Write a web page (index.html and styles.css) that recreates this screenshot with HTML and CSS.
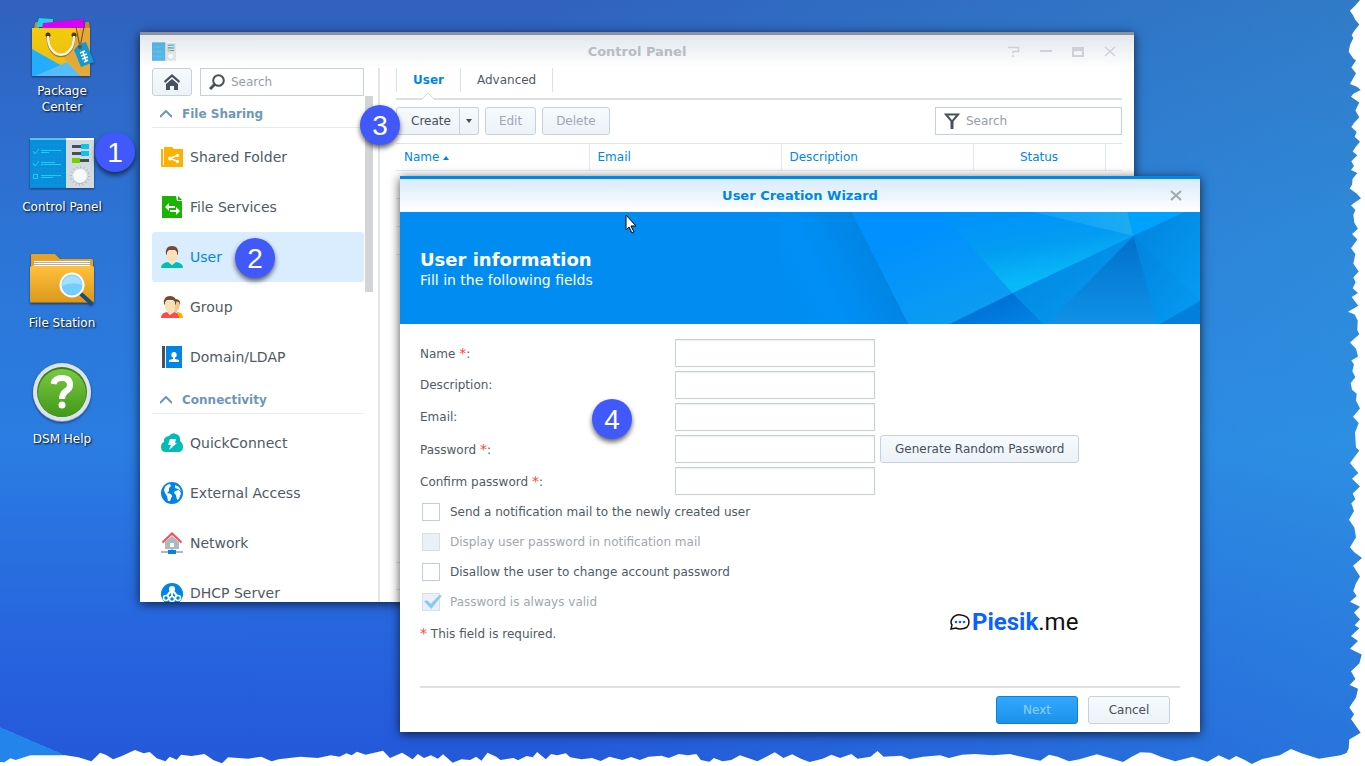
FILE: index.html
```html
<!DOCTYPE html>
<html lang="en">
<head>
<meta charset="utf-8">
<title>Control Panel - User Creation Wizard</title>
<link rel="stylesheet" href="styles.css">
</head>
<body>
<div class="desktop">
  <nav class="shortcuts" aria-label="Desktop">
    <a class="shortcut" href="#package-center">
      <svg viewBox="0 0 64 64" width="64" height="64" aria-hidden="true">
        <defs><linearGradient id="bag" x2="0" y2="1"><stop offset="0" stop-color="#f2cc0a"/><stop offset="1" stop-color="#e9b91a"/></linearGradient></defs>
        <path d="M5 8l1-1h3v6H4zM55 8l1-1h3l1 6h-5z" fill="#c78a20"/>
        <path d="M9 3l14 1v8H6z" fill="#22d0ee"/>
        <path d="M13 8L53 4l2 10H12z" fill="#d800f5"/>
        <path d="M2 13h58v48H2z" fill="url(#bag)"/>
        <path d="M50 13h10v48H50L34 43z" fill="#e5a93a"/>
        <path d="M2 34l48 27H2z" fill="#22aefc"/>
        <path d="M5 61l32-14 13 14z" fill="#55bdf8"/>
        <circle cx="18" cy="20" r="2.500" fill="#50310a"/><circle cx="44" cy="20" r="2.500" fill="#50310a"/>
        <path d="M18 22c0 25 26 25 26 0" fill="none" stroke="#a87518" stroke-width="3"/>
        <path d="M18 21c0 25 26 25 26 0" fill="none" stroke="#fff3e2" stroke-width="2.500"/>
        <path d="M46 12l4 20 4-20" fill="none" stroke="#6d491b" stroke-width="1"/>
        <path d="M44 35l5-6 7-2 8 20-13 5z" fill="#1499d7"/>
        <circle cx="50" cy="32" r="2" fill="#795021"/>
        <path d="M50 38l5-2M51 41l6-2M52 44l6-2M54 47l4-2M53 37l3 9" stroke="#fff" stroke-width="1.500"/>
      </svg>
      <span>Package<br>Center</span>
    </a>
    <a class="shortcut" href="#control-panel">
      <svg viewBox="0 0 64 64" width="64" height="64" aria-hidden="true">
        <g id="panel-art">
          <path d="M0 7h36v50H0z" fill="#078ed9"/><path d="M36 7h28v50H36z" fill="#d3dbe0"/>
          <path d="M0 7h36v2H0z" fill="#59c3f2"/><path d="M36 7h28v2H36z" fill="#fff"/>
          <path d="M4 9v48M8 9v48M12 9v48M16 9v48M20 9v48M24 9v48M28 9v48M32 9v48M0 14h36M0 18h36M0 22h36M0 26h36M0 30h36M0 34h36M0 38h36M0 42h36M0 46h36M0 50h36M0 54h36" stroke="#22a1e5" stroke-width=".5" opacity=".5"/>
          <path d="M3 20l2 3 4-5M3 32l2 3 4-5M3.500 43.500h4v4h-4zM11 19.500h20M11 21.500h8M11 31.500h14M11 33.500h20M11 44.500h20M11 46.500h12" fill="none" stroke="#19cdf5"/>
          <path d="M42 14h17v3H42zM42 21h17v3H42zM42 28h17v3H42z" fill="#454f59"/>
          <path d="M51 13h8v5h-8zM51 20h8v5h-8z" fill="#0cc3ef"/><path d="M42 27h8v5h-8z" fill="#75d000"/>
          <circle cx="50" cy="45" r="9" fill="none" stroke="#99a4ab" stroke-width="1.500" stroke-dasharray=".7 2.830"/>
          <circle cx="50" cy="46" r="7" fill="#aeb6bb"/><circle cx="50" cy="45" r="7" fill="#f6f8f9"/>
        </g>
      </svg>
      <span>Control Panel</span>
    </a>
    <a class="shortcut" href="#file-station">
      <svg viewBox="0 0 64 64" width="64" height="64" aria-hidden="true">
        <defs><linearGradient id="fold" x2="0" y2="1"><stop offset="0" stop-color="#ffc13e"/><stop offset="1" stop-color="#db9719"/></linearGradient></defs>
        <path d="M1 8q0-1 2-1h22l5 5h31q2 0 2 2v30H1z" fill="#e6a223"/>
        <path d="M4 14h56v10H4z" fill="#fff"/><path d="M4 15.500h56M4 17.500h56" stroke="#b7b0a4"/>
        <path d="M0 21q0-2 2-2h60q2 0 2 2v33q0 2-2 2H2q-2 0-2-2z" fill="url(#fold)"/>
        <path d="M1 55.500h62" stroke="#a76c0b" stroke-width="1"/>
        <path d="M51 47l10 9" stroke="#164f72" stroke-width="4" stroke-linecap="round"/>
        <circle cx="42" cy="38" r="11.500" fill="#75cdfc" stroke="#fff" stroke-width="2"/>
        <path d="M32 39q10-5 20-1a10 10 0 0 0-20 1z" fill="#a3e1ff"/>
      </svg>
      <span>File Station</span>
    </a>
    <a class="shortcut" href="#help">
      <svg viewBox="0 3 64 64" width="64" height="64" aria-hidden="true">
        <defs><linearGradient id="help" x2="0" y2="1"><stop offset="0" stop-color="#7bc842"/><stop offset="1" stop-color="#429819"/></linearGradient></defs>
        <circle cx="32" cy="33" r="29" fill="#8297b5"/><circle cx="32" cy="32" r="29" fill="#dbe3ef"/>
        <circle cx="32" cy="32" r="25" fill="#377f1c"/><circle cx="32" cy="33" r="24" fill="url(#help)"/>
        <path d="M23.500 24q1-6 8.500-6 8 0 8 7 0 4-4 6-4 3-4 8" fill="none" stroke="#fff" stroke-width="6"/>
        <circle cx="32" cy="45" r="3.500" fill="#fff"/>
      </svg>
      <span>DSM Help</span>
    </a>
  </nav>

  <section class="window panel" aria-label="Control Panel">
    <header class="titlebar">
      <svg class="title-icon" viewBox="0 7 64 53" width="24" height="20" aria-hidden="true"><use href="#panel-art"/></svg>
      <h1 class="title">Control Panel</h1>
      <div class="controls">
        <button type="button" aria-label="Help"><svg viewBox="0 0 12 12" width="12" height="12"><path d="M0 1.500h10.500v4H5v2M5 9v2" stroke-width="1.500"/></svg></button>
        <button type="button" aria-label="Minimize"><svg viewBox="0 0 12 12" width="12" height="12"><path d="M0 5h12" stroke-width="2"/></svg></button>
        <button type="button" aria-label="Maximize"><svg viewBox="0 0 12 12" width="12" height="12"><path d="M0 2h12M1 1v9h10V1M1 4h10" stroke-width="2"/></svg></button>
        <button type="button" aria-label="Close"><svg viewBox="0 0 12 12" width="12" height="12"><path d="M1 1l10 9M11 1L1 10" stroke-width="1.500"/></svg></button>
      </div>
    </header>
    <div class="panel-body">
      <aside class="sidebar">
        <div class="side-tools">
          <button class="btn home" type="button" aria-label="Home"><svg viewBox="0 0 16 16" width="16" height="16"><path d="M0 7l8-7 8 7-1 2-7-6-7 6z" fill="#46515d"/><path d="M2 10l6-5 6 5v6h-4v-4H6v4H2z" fill="#46515d"/></svg></button>
          <label class="search"><svg viewBox="0 0 16 16" width="16" height="16" aria-hidden="true"><path d="M1 15l5-5" stroke="#46515d" stroke-width="3"/><circle cx="9.500" cy="6.500" r="5.300" fill="none" stroke="#46515d" stroke-width="2"/></svg><input type="text" placeholder="Search" aria-label="Search settings"></label>
        </div>
        <div class="side-scroll">
          <h2 class="group-title"><svg viewBox="0 0 12 8" width="12" height="8"><path d="M0 7l6-6 6 6"/></svg>File Sharing</h2>
          <ul class="side-list">
            <li><a href="#shared"><svg viewBox="0 0 22 22" width="22" height="22"><path d="M0 3h2v18H0z" fill="#ffb000"/><path d="M3 1h8l2 2h9v17H3z" fill="#ffb000"/><path d="M0 19h22v2H0z" fill="#ffb000"/><path d="M17 9l-8 3.500 8 3" fill="none" stroke="#fff" stroke-width="1.500"/><circle cx="9" cy="12.500" r="2" fill="#fff"/><circle cx="16.500" cy="9.500" r="1.700" fill="#fff"/><circle cx="16.500" cy="15.500" r="1.700" fill="#fff"/></svg>Shared Folder</a></li>
            <li><a href="#services"><svg viewBox="0 0 22 22" width="22" height="22"><path d="M1 0h14l1 5h5v17H1z" fill="#19b500"/><path d="M17 0l4 4h-4z" fill="#19b500"/><path d="M4 11l4-4v3h6v2H8v3zM19 15l-4-4v3H9v2h6v3z" fill="#fff"/></svg>File Services</a></li>
            <li><a class="active" href="#user" aria-current="page"><svg viewBox="0 0 22 22" width="22" height="22"><path d="M0 22q0-5 7-6l4 3 4-3q7 1 7 6z" fill="#00bebb"/><path d="M6 5h10q1 9-3 11v1l-2 2-2-2v-1Q5 13 6 5z" fill="#ffdfb5"/><path d="M5 8Q4 0 11 0t6 8l-1 1V6l-2-2H8L6 6v3z" fill="#79482a"/></svg>User</a></li>
            <li><a href="#group"><svg viewBox="0 0 22 22" width="22" height="22"><path d="M16 22v-6q6 0 6 6z" fill="#ffae00"/><path d="M14 5h5q0 8-3 10v1h-3z" fill="#f5c68e"/><path d="M14 3q6 0 5 6l-1-3-4-1z" fill="#673c21"/><path d="M0 22q0-5 6-6l3 3 4-3q5 1 5 6z" fill="#ff4a4a"/><path d="M4 5h10q1 9-3 11v1l-2 2-2-2v-1Q3 13 4 5z" fill="#ffdfb5"/><path d="M3 8Q2 0 9 0t6 8l-1 1V6l-2-2H6L4 6v3z" fill="#79482a"/></svg>Group</a></li>
            <li><a href="#domain"><svg viewBox="0 0 22 22" width="22" height="22"><path d="M1 0h3v22H1z" fill="#46515d"/><path d="M5 0h16v22H5z" fill="#0084e6"/><path d="M8 16v-2l4-1v-2q-2-5 1-5t1 5v2l4 1v2z" fill="#fff"/><circle cx="13" cy="9" r="2.700" fill="#fff"/></svg>Domain/LDAP</a></li>
          </ul>
          <h2 class="group-title"><svg viewBox="0 0 12 8" width="12" height="8"><path d="M0 7l6-6 6 6"/></svg>Connectivity</h2>
          <ul class="side-list">
            <li><a href="#quickconnect"><svg viewBox="0 0 22 22" width="22" height="22"><path d="M5 20q-5 0-5-5 0-4 3-5-1-5 5-6 3-4 7-2 4 1 4 5v2q3 2 3 6 0 5-5 5z" fill="#00bcb9"/><path d="M9 7h6l-1 4h2l-8 7 2-5H7z" fill="#fff"/></svg>QuickConnect</a></li>
            <li><a href="#external"><svg viewBox="0 0 22 22" width="22" height="22"><circle cx="11" cy="11" r="11" fill="#0084e6"/><path d="M4 5q2-3 5-3l1 2-2 2v3l-2 2 4 1 1 2-2 5H7l-1-5-2-3-1-3zM14 3l4 2 2 4-3-2-3-1zM14 9l4-1 2 3-2 6-2 1-1-5-2-2z" fill="#fff"/></svg>External Access</a></li>
            <li><a href="#network"><svg viewBox="0 0 22 22" width="22" height="22"><path d="M4 10l7-6 7 6v7H4z" fill="#acb8c4"/><path d="M1.500 10.500L11 1.500l9.500 9" fill="none" stroke="#ff4b4b" stroke-width="2"/><path d="M9 11h4v4H9z" fill="#fff"/><path d="M11 17v3M0 20h22" stroke="#acb8c4" stroke-width="2"/><path d="M7 18h8v4H7z" fill="#0084e6"/></svg>Network</a></li>
            <li><a href="#dhcp"><svg viewBox="0 0 22 22" width="22" height="22"><circle cx="11" cy="12" r="11" fill="#0084e6"/><path d="M11 8v9M10 9l-5 6M12 9l5 6" stroke="#fff" stroke-width="2"/><circle cx="11" cy="7" r="3" fill="#fff"/><g fill="#0084e6" stroke="#fff" stroke-width="1.500"><circle cx="5" cy="16" r="2.500"/><circle cx="11" cy="17" r="2.500"/><circle cx="17" cy="16" r="2.500"/></g></svg>DHCP Server</a></li>
          </ul>
        </div>
      </aside>
      <div class="scroll-thumb"></div>
      <main class="content">
        <nav class="tabs" aria-label="Sections"><a class="tab current" href="#user-tab">User<svg viewBox="0 0 14 8" width="14" height="8" aria-hidden="true"><path d="M1 7l6-6 6 6v1H1z" fill="#fff"/><path d="M1 7l6-6 6 6" fill="none" stroke="#d5d8dc" stroke-width="1"/></svg></a><a class="tab" href="#advanced">Advanced</a></nav>
        <div class="toolbar">
          <div class="split"><button class="btn create" type="button">Create</button><button class="btn drop" type="button" aria-label="More create options"><svg viewBox="0 0 6 4" width="6" height="4"><path d="M0 0h6L3 4z" fill="#414b55"/></svg></button></div>
          <button class="btn" type="button" disabled>Edit</button>
          <button class="btn" type="button" disabled>Delete</button>
          <label class="search filter"><svg viewBox="0 0 16 16" width="16" height="16" aria-hidden="true"><path d="M2 1.500h12L8.500 8v7h-1V8z" fill="none" stroke="#46515d" stroke-width="2"/></svg><input type="text" placeholder="Search" aria-label="Filter users"></label>
        </div>
        <table class="users">
          <colgroup><col class="c-wide"><col class="c-mid"><col class="c-mid"><col class="c-status"><col></colgroup>
          <thead><tr><th>Name <svg viewBox="0 0 6 4" width="6" height="4"><path d="M0 4h6L3 0z" fill="#0084e6"/></svg></th><th>Email</th><th>Description</th><th class="center">Status</th><th></th></tr></thead>
          <tbody><tr><td colspan="5"></td></tr><tr><td colspan="5"></td></tr><tr><td colspan="5"></td></tr></tbody>
        </table>
        <div class="paging"></div>
      </main>
    </div>
  </section>

  <section class="window wizard" role="dialog" aria-labelledby="wiz-title">
    <header class="titlebar blue">
      <h2 class="title" id="wiz-title">User Creation Wizard</h2>
      <div class="controls"><button type="button" aria-label="Close"><svg viewBox="0 0 12 12" width="12" height="12"><path d="M1 1l10 9M11 1L1 10" stroke-width="2"/></svg></button></div>
    </header>
    <div class="banner">
      <div class="banner-text"><h3>User information</h3><p>Fill in the following fields</p></div>
      <svg class="facets" viewBox="0 126 1260 336" preserveAspectRatio="none" aria-hidden="true">
        <defs>
          <linearGradient id="f1" gradientUnits="userSpaceOnUse" x1="0" y1="446" x2="300" y2="294"><stop offset="0" stop-color="#008cf0"/><stop offset=".5" stop-color="#008ff6"/><stop offset="1" stop-color="#0085e4"/></linearGradient>
          <linearGradient id="f2" x2=".6" y2="1"><stop offset=".3" stop-color="#0090ff"/><stop offset="1" stop-color="#0c9cf2"/></linearGradient>
          <linearGradient id="f3" x1=".3" y1="0" x2=".6" y2=".8"><stop offset="0" stop-color="#0093fc"/><stop offset=".5" stop-color="#039cf2"/><stop offset="1" stop-color="#08b8f8"/></linearGradient>
          <linearGradient id="f4" x2="1"><stop offset="0" stop-color="#0f9fff"/><stop offset="1" stop-color="#1cacf1"/></linearGradient>
          <linearGradient id="f5" x2="0" y2="1"><stop offset="0" stop-color="#0070cb"/><stop offset="1" stop-color="#1092e8"/></linearGradient>
          <linearGradient id="f6" x2="1" y2="1"><stop offset="0" stop-color="#0083dd"/><stop offset="1" stop-color="#069cf4"/></linearGradient>
          <linearGradient id="f7" x2="1" y2="1"><stop offset="0" stop-color="#0064d0"/><stop offset="1" stop-color="#0087e4"/></linearGradient>
        </defs>
        <path d="M0 126h215l170 336H0z" fill="url(#f1)"/>
        <path d="M215 126h265l217 244-187 92H385z" fill="url(#f2)"/>
        <path d="M480 126h280l300 72-363 172z" fill="url(#f3)"/>
        <path d="M760 126h283l17 72z" fill="url(#f4)"/>
        <path d="M1043 126h172l-155 72z" fill="#00a2ff"/>
        <path d="M1215 126h45v267l-200-195z" fill="url(#f6)"/>
        <path d="M1060 198l200 195-120 69h-8z" fill="url(#f6)"/>
        <path d="M1060 198l72 264H800z" fill="url(#f5)"/>
        <path d="M697 370l363-172-260 264h-10z" fill="url(#f6)"/>
        <path d="M510 462l187-92 93 92z" fill="url(#f7)"/>
        <path d="M1260 393v69h-120z" fill="#0080da"/>
      </svg>
    </div>
    <form class="form" id="create-user">
      <div class="row"><label for="name">Name <i>*</i>:</label><input class="field" id="name" type="text"></div>
      <div class="row"><label for="desc">Description:</label><input class="field" id="desc" type="text"></div>
      <div class="row"><label for="email">Email:</label><input class="field" id="email" type="text"></div>
      <div class="row"><label for="pass">Password <i>*</i>:</label><input class="field" id="pass" type="password"><button class="btn" type="button">Generate Random Password</button></div>
      <div class="row"><label for="confirm">Confirm password <i>*</i>:</label><input class="field" id="confirm" type="password"></div>
      <div class="checks">
        <label><input type="checkbox">Send a notification mail to the newly created user</label>
        <label class="off"><input type="checkbox" disabled>Display user password in notification mail</label>
        <label><input type="checkbox">Disallow the user to change account password</label>
        <label class="off"><input type="checkbox" checked disabled>Password is always valid</label>
      </div>
      <p class="note"><i>*</i> This field is required.</p>
    </form>
    <footer class="actions"><button class="btn primary" type="submit" form="create-user" disabled>Next</button><button class="btn cancel" type="button">Cancel</button></footer>
  </section>

  <div class="brand">
    <svg viewBox="0 0 20 18" width="20" height="18" aria-hidden="true"><path d="M2 12Q0 9 2 6q3-5 9-4 8 1 8 7 0 7-9 7-2 0-4-1l-5 1z" fill="none" stroke="#111" stroke-width="1.500"/><g fill="#0b63ff"><circle cx="6" cy="9" r="1.300"/><circle cx="10" cy="9" r="1.300"/><circle cx="14" cy="9" r="1.300"/></g></svg>
    <b>Piesik</b>.me
  </div>

  <span class="step step-1">1</span>
  <span class="step step-2">2</span>
  <span class="step step-3">3</span>
  <span class="step step-4">4</span>
  <svg class="cursor" viewBox="0 0 12 20" width="12" height="20" aria-hidden="true"><path d="M1 1v15l3-3 3 6 2-1-3-6h5z" fill="#fff" stroke="#000"/></svg>

  <svg class="torn-right" viewBox="0 0 495 1568" preserveAspectRatio="none" aria-hidden="true"><path fill="#fff" d="M495 0H480L465 12 450 22 460 32 465 40 478 50 462 64 455 72 460 78 450 92 446 106 460 120 468 124 454 138 468 150 458 162 450 172 472 178 482 184 460 192 453 198 478 210 466 226 478 240 462 252 454 260 470 270 464 280 480 290 468 300 458 310 472 318 454 330 462 340 453 348 472 354 458 366 456 378 449 386 470 396 483 406 453 420 466 430 460 440 463 456 474 468 456 479 472 490 453 508 466 520 460 540 476 556 460 568 467 578 458 590 474 600 455 608 475 626 444 638 464 644 473 656 472 676 478 684 450 701 468 714 474 730 454 738 462 746 457 760 466 772 452 784 456 798 470 806 468 820 480 836 459 853 476 866 465 886 468 916 478 922 450 948 475 968 456 980 480 996 458 1010 466 1022 454 1030 462 1046 447 1064 463 1080 468 1100 450 1120 462 1130 486 1142 459 1158 480 1180 468 1194 460 1210 470 1220 450 1232 480 1242 462 1254 480 1268 464 1280 478 1286 453 1302 474 1312 450 1328 485 1340 478 1358 453 1374 466 1390 449 1402 474 1410 468 1428 448 1448 462 1462 453 1472 482 1500 448 1514 446 1532 435 1548 430 1568H495z"/></svg>
  <svg class="torn-bottom" viewBox="0 0 1568 498" preserveAspectRatio="none" aria-hidden="true"><path fill="#fff" d="M0 498V486L5 487 12 475 18 480 25 474 35 466 75 466 90 472 105 484 115 458 122 465 130 478 140 468 155 450 165 460 172 456 180 475 190 484 195 470 203 479 208 464 220 468 235 462 245 480 255 490 262 472 285 476 300 470 312 484 320 478 345 470 365 474 380 466 390 470 398 460 404 466 410 455 420 464 430 458 440 452 448 474 462 458 474 478 480 462 487 474 495 466 503 476 509 463 520 488 530 478 540 480 547 470 553 482 560 458 570 470 575 480 590 474 595 481 605 468 612 472 617 456 627 478 633 462 640 466 650 460 655 472 668 478 680 474 690 483 700 470 715 480 725 471 735 480 745 470 760 467 768 474 780 462 790 466 800 462 805 480 815 485 820 474 830 484 840 480 850 466 870 484 890 457 900 474 910 463 920 476 930 486 945 476 955 464 965 474 978 462 985 476 1000 470 1008 453 1015 470 1035 467 1045 478 1060 470 1080 466 1090 474 1105 464 1120 462 1140 466 1160 462 1180 474 1195 482 1205 464 1215 470 1228 484 1240 478 1260 463 1275 474 1290 486 1300 470 1310 457 1322 458 1335 472 1350 484 1370 470 1387 485 1400 466 1412 480 1420 468 1430 480 1438 492 1450 477 1470 466 1483 447 1495 460 1515 476 1540 466 1550 456 1568 440V498z"/></svg>
</div>
</body>
</html>
```
FILE: styles.css
```css
* { box-sizing: border-box; }

html, body { height: 100%; }

body {
  margin: 0;
  font: 12px/16px "DejaVu Sans", Verdana, sans-serif;
  color: #505a64;
}

h1, h2, h3, p, ul { margin: 0; padding: 0; }
a { color: inherit; text-decoration: none; }
i { color: #f44; font-size: 14px; font-style: normal; }
button, input { font: inherit; color: inherit; }

.desktop {
  position: relative;
  height: 100vh;
  overflow: hidden;
  background:
    linear-gradient(to top right, #2384ec 50%, transparent 50%) 0 100% / 90px 39px no-repeat,
    linear-gradient(90deg, transparent 40%, rgba(50, 190, 225, .28)) 0 0 / 100% 100%,
    linear-gradient(#3062be, #2c74d6 30%, #2a7de2 58%, #2766de 82%, #2458da);
}

/* Desktop icons */
.shortcuts {
  display: flex;
  flex-direction: column;
  gap: 4px;
  width: 124px;
  padding-top: 15px;
}

.shortcut {
  display: flex;
  flex-direction: column;
  align-items: center;
  gap: 4px;
  min-height: 112px;
  color: #fff;
  text-align: center;
  text-shadow: 1px 1px 2px #000;
}

.shortcut svg { filter: drop-shadow(0 1px 1px rgba(0, 0, 0, .5)); }

/* Windows */
.window {
  position: absolute;
  display: flex;
  flex-direction: column;
  background: #fff;
  box-shadow: 0 2px 10px rgba(0, 0, 0, .7);
}

.panel {
  top: 32px;
  right: 231px;
  bottom: 164px;
  left: 140px;
  border-top: 3px solid #8a929e;
}

.wizard {
  top: 176px;
  right: 165px;
  left: 400px;
  border-top: 3px solid #0088e6;
}

.titlebar {
  display: grid;
  grid-template-columns: 1fr auto 1fr;
  align-items: center;
  flex: none;
  height: 33px;
  padding: 0 12px;
  background: linear-gradient(#e3e7ec, #fff);
}

.titlebar.blue { background: linear-gradient(#d8ebfb, #fff); }
.title-icon { opacity: .65; }
.title { grid-column: 2; font-size: 13px; color: #b6bcc5; }
.blue .title { color: #0086e5; }

.controls {
  grid-column: 3;
  display: flex;
  justify-content: flex-end;
  gap: 12px;
  margin-right: 2px;
}

.controls button {
  display: flex;
  justify-content: center;
  width: 20px;
  padding: 0;
  border: 0;
  background: none;
}

.controls svg { fill: none; stroke: #9ea7b2; }
.panel .controls svg { stroke: #cdd1d6; }

/* Shared controls */
.btn {
  height: 28px;
  padding: 0 14px;
  border: 1px solid #c5d2de;
  border-radius: 3px;
  background: linear-gradient(#f6fafd, #ecf2f7);
  color: #465059;
}

.btn:disabled { color: #9da8b3; }

.search {
  display: flex;
  align-items: center;
  flex: 1;
  gap: 6px;
  height: 28px;
  padding: 0 8px;
  border: 1px solid #c5d1de;
  background: #fff;
}

.search svg { flex: none; }
.search input { width: 100%; min-width: 0; padding: 0; border: 0; outline: 0; background: none; }
.search input::placeholder { color: #969da5; opacity: 1; }

.panel-body {
  display: flex;
  flex: 1;
  min-height: 0;
  padding: 0 12px;
}

/* Sidebar */
.sidebar {
  display: flex;
  flex-direction: column;
  width: 212px;
  min-height: 0;
}

.side-tools { display: flex; gap: 8px; }
.home { display: flex; align-items: center; justify-content: center; width: 40px; padding: 0; }
.side-scroll { flex: 1; padding-top: 4px; overflow: hidden; }

.group-title {
  display: flex;
  align-items: center;
  gap: 10px;
  height: 28px;
  padding-left: 8px;
  border-bottom: 1px solid #e4ebf1;
  font-size: 12px;
  color: #6d97b7;
}

.group-title svg { fill: none; stroke: #6d97b7; stroke-width: 2; }
.side-list { padding: 4px 0; list-style: none; }

.side-list a {
  display: flex;
  align-items: center;
  gap: 7px;
  height: 50px;
  padding-left: 9px;
  border-radius: 3px;
  font-size: 14px;
}

.side-list .active { background: #d9edff; color: #0086e5; }
.scroll-thumb { width: 8px; height: 196px; margin: 28px 5px 0 1px; background: #d2d4d7; }

/* Main area */
.content {
  display: flex;
  flex: 1;
  flex-direction: column;
  padding-left: 16px;
  border-left: 2px solid #e4e5e7;
}

.tabs {
  display: flex;
  height: 32px;
  border-bottom: 2px solid #dddfe1;
}

.tab {
  position: relative;
  height: 24px;
  padding: 4px 16px;
  border-right: 1px solid #d5e1ed;
}

.tab:first-child { border-left: 1px solid #d5e1ed; }
.tab.current { font-weight: bold; color: #0086e5; }
.tab svg { position: absolute; top: 24px; left: 24px; }

.toolbar { display: flex; gap: 6px; padding: 7px 0 8px; }
.toolbar .btn { padding: 0 13px; }
.toolbar .split { display: flex; }
.toolbar .create { padding: 0 8px 0 14px; border-radius: 3px 0 0 3px; }
.toolbar .drop { display: flex; align-items: center; width: 19px; padding: 0 6px; border-left: 0; border-radius: 0 3px 3px 0; }
.search.filter { flex: 0 0 187px; margin-left: auto; }

.users { width: 100%; border-collapse: collapse; table-layout: fixed; border-top: 1px solid #dce5ed; }
.users th { height: 27px; padding: 0 8px; border-right: 1px solid #e0e8ef; font-weight: normal; text-align: left; color: #0086e5; }
.users th:last-child { border-right: 0; }
.users th.center { text-align: center; }
.users th svg { vertical-align: middle; }
.users tr { border-bottom: 1px solid #e4e9ee; }
.users td { height: 28px; padding: 0; }
.c-wide { width: 193px; }
.c-mid { width: 192px; }
.c-status { width: 132px; }
.paging { height: 28px; margin: auto 0 12px; border: solid #e1e4e7; border-width: 1px 0; }

/* Wizard */
.banner {
  display: flex;
  justify-content: space-between;
  height: 112px;
  background: #008cf0;
  color: #fff;
}

.banner-text { padding: 37px 20px; font-size: 14px; }
.banner h3 { font-size: 18px; line-height: 22px; }
.banner p { line-height: 18px; }
.facets { width: 420px; height: 112px; }

.form { padding: 15px 20px 0; }
.row { display: flex; align-items: center; gap: 5px; margin-bottom: 4px; }
.row label { width: 250px; }
.field { width: 200px; height: 28px; border: 1px solid #c3d0dd; background: #fff; box-shadow: inset 0 1px 1px #eee; }

.checks { margin-top: -2px; }
.checks label { display: flex; align-items: center; gap: 10px; height: 30px; padding-left: 2px; }
.checks .off { color: #a0a7ae; }

.checks input {
  display: grid;
  width: 18px;
  height: 18px;
  margin: 0;
  border: 1px solid #c0cedc;
  appearance: none;
  background: #fff;
}

.checks input:disabled { border-color: #d6e0e9; background: #eaf0f5; }

.checks input:checked::after {
  content: "";
  width: 18px;
  height: 14px;
  margin: 1px;
  background: #8ac8f5;
  clip-path: polygon(0 45%, 16% 38%, 38% 62%, 86% 0, 100% 4%, 40% 100%);
}

.note { padding: 8px 0 44px; }

.actions {
  display: flex;
  justify-content: flex-end;
  gap: 10px;
  margin: 0 20px;
  padding: 8px 10px;
  border-top: 2px solid #dddfe1;
}

.actions .btn { width: 82px; }
.primary:disabled { border-color: #0f80d6; background: linear-gradient(#32a7ff, #1b93eb); color: #91d0ff; }

/* Annotations over the desktop */
.brand {
  position: absolute;
  top: 608px;
  left: 950px;
  display: flex;
  align-items: center;
  font: 24px/28px Roboto, sans-serif;
  color: #111;
}

.brand svg { margin-right: 2px; }
.brand b { color: #0b63ff; }

.step {
  position: absolute;
  width: 40px;
  height: 40px;
  border-radius: 50%;
  background: #4159fb;
  box-shadow: 0 3px 5px rgba(0, 0, 0, .6);
  color: #fff;
  font: 28px/42px "Liberation Sans", Arial, sans-serif;
  text-align: center;
}

.step-1 { top: 132px; left: 95px; }
.step-2 { top: 238px; left: 235px; }
.step-3 { top: 105px; left: 360px; }
.step-4 { top: 399px; left: 592px; }
.cursor { position: absolute; top: 214px; left: 625px; }

.torn-right, .torn-bottom { position: absolute; right: 0; bottom: 0; pointer-events: none; }
.torn-right { width: 165px; height: 100%; }
.torn-bottom { width: 100%; height: 166px; }
```
